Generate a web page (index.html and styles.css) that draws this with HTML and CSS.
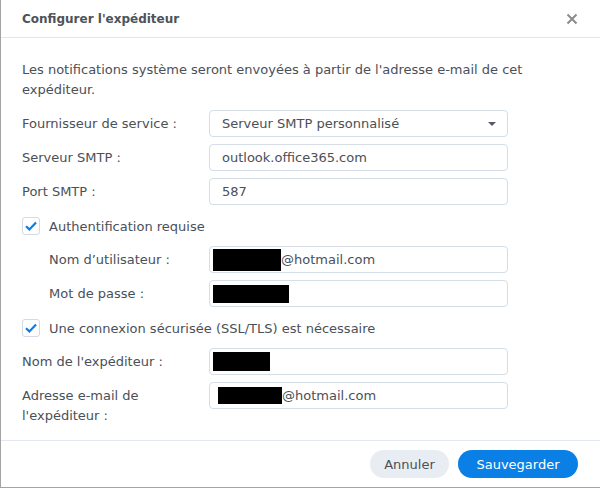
FILE: index.html
```html
<!DOCTYPE html>
<html lang="fr">

<head>
	<meta charset="UTF-8">
	<title>Configurer l'expéditeur</title>
	<link rel="stylesheet" href="styles.css">
</head>

<body>
	<div class="dialog">
		<div class="dialog-header">
			<span class="dialog-title">Configurer l'expéditeur</span>
			<span class="close-btn">
				<svg width="12" height="12" viewBox="0 0 12 12">
					<path d="M1.5 1.5 L10.5 10.5 M10.5 1.5 L1.5 10.5" stroke="#8c8c8c" stroke-width="2" fill="none" />
				</svg>
			</span>
		</div>

		<div class="dialog-body">
			<p class="desc">Les notifications système seront envoyées à partir de l'adresse e-mail de cet expéditeur.</p>

			<div class="form">
				<div class="row">
					<label>Fournisseur de service :</label>
					<div class="field select">
						<span>Serveur SMTP personnalisé</span>
						<span class="caret"></span>
					</div>
				</div>

				<div class="row">
					<label>Serveur SMTP :</label>
					<div class="field">outlook.office365.com</div>
				</div>

				<div class="row">
					<label>Port SMTP :</label>
					<div class="field">587</div>
				</div>

				<div class="check-row">
					<span class="checkbox">
						<svg width="14" height="14" viewBox="0 0 14 14">
							<path d="M2 7.2 L5.4 10.4 L12 3.4" stroke="#0a7fe6" stroke-width="2.2" fill="none" />
						</svg>
					</span>
					<span>Authentification requise</span>
				</div>

				<div class="row sub">
					<label>Nom d’utilisateur :</label>
					<div class="field"><span class="redact user"></span>@hotmail.com</div>
				</div>

				<div class="row sub">
					<label>Mot de passe :</label>
					<div class="field"><span class="redact pass"></span></div>
				</div>

				<div class="check-row">
					<span class="checkbox">
						<svg width="14" height="14" viewBox="0 0 14 14">
							<path d="M2 7.2 L5.4 10.4 L12 3.4" stroke="#0a7fe6" stroke-width="2.2" fill="none" />
						</svg>
					</span>
					<span>Une connexion sécurisée (SSL/TLS) est nécessaire</span>
				</div>

				<div class="row">
					<label>Nom de l'expéditeur :</label>
					<div class="field"><span class="redact sender"></span></div>
				</div>

				<div class="row">
					<label>Adresse e-mail de l'expéditeur :</label>
					<div class="field"><span class="redact mail"></span>@hotmail.com</div>
				</div>
			</div>
		</div>

		<div class="dialog-footer">
			<button class="btn btn-cancel">Annuler</button>
			<button class="btn btn-save">Sauvegarder</button>
		</div>
	</div>
</body>

</html>
```

FILE: styles.css
```css
body {
	margin: 0;
	background-color: #fff;
	font-family: "DejaVu Sans", Verdana, sans-serif;
	font-size: 13px;
	color: #4a5058;
}

.dialog {
	width: 599px;
	height: 487px;
	border-left: 1px solid #a4a4a4;
	border-bottom: 1px solid #a4a4a4;
	display: flex;
	flex-direction: column;
	background-color: #fff;
}

.dialog-header {
	height: 37px;
	border-bottom: 1px solid #e3e8ee;
	padding: 0 22px 0 21px;
	display: flex;
	align-items: center;
	justify-content: space-between;
	flex-shrink: 0;
}

.dialog-title {
	font-weight: bold;
	font-size: 12px;
	color: #4d5359;
}

.close-btn {
	display: flex;
}

.dialog-body {
	flex: 1;
	padding: 22px 21px 0;
	overflow: hidden;
}

.desc {
	margin: 0 0 10px;
	line-height: 20px;
	width: 540px;
}

.form {
	display: flex;
	flex-direction: column;
	gap: 7px;
}

.row {
	display: grid;
	grid-template-columns: 187px 299px;
	align-items: start;
}

.row label {
	line-height: 20px;
	padding-top: 4px;
	padding-right: 12px;
}

.row.sub label {
	padding-left: 27px;
}

.field {
	height: 25px;
	border: 1px solid #d5dde6;
	border-radius: 4px;
	padding: 0 12px;
	display: flex;
	align-items: center;
	white-space: nowrap;
}

.select {
	justify-content: space-between;
	padding-right: 11px;
}

.caret {
	width: 0;
	height: 0;
	border-left: 4px solid transparent;
	border-right: 4px solid transparent;
	border-top: 4px solid #555b62;
}

.check-row {
	display: flex;
	align-items: center;
	gap: 9px;
	height: 18px;
	margin: 5px 0 4px;
}

.checkbox {
	width: 16px;
	height: 16px;
	border: 1px solid #d3dae3;
	border-radius: 3px;
	display: flex;
	align-items: center;
	justify-content: center;
}

.redact {
	display: inline-block;
	background-color: #000;
}

.redact.user {
	width: 68px;
	height: 22px;
	margin-left: -9px;
}

.redact.pass {
	width: 76px;
	height: 18px;
	margin-left: -9px;
}

.redact.sender {
	width: 57px;
	height: 19px;
	margin-left: -9px;
}

.redact.mail {
	width: 64px;
	height: 17px;
	margin-left: -4px;
}

.dialog-footer {
	box-sizing: border-box;
	height: 47px;
	border-top: 1px solid #e3e8ee;
	display: flex;
	align-items: flex-start;
	justify-content: flex-end;
	gap: 9px;
	padding: 9px 22px 0 0;
	flex-shrink: 0;
}

.btn {
	height: 28px;
	border: none;
	border-radius: 14px;
	font-family: inherit;
	font-size: 13px;
	cursor: pointer;
}

.btn-cancel {
	width: 79px;
	background-color: #e8edf3;
	color: #4a5058;
}

.btn-save {
	width: 120px;
	background-color: #0a7fe6;
	color: #fff;
}
```
